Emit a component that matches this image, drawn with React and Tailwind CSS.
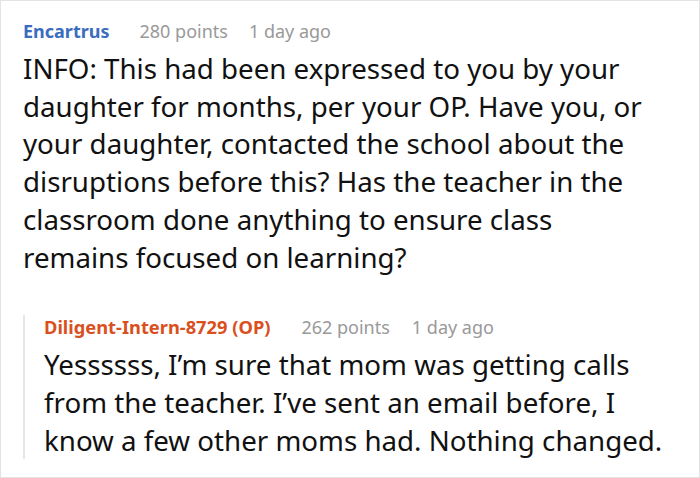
export default function App() {
  const font = { fontFamily: '"Noto Sans", "Open Sans", sans-serif' };
  return (
    <div className="w-[700px] h-[478px] bg-white border border-[#e3e3e3] pl-[22px] pr-[10px] pt-[18px]" style={font}>
      <div className="flex items-baseline text-[18px] leading-[24px]">
        <span className="font-bold text-[#3a6cbf]">Encartrus</span>
        <span className="ml-[30px] text-[#999999]">280 points</span>
        <span className="ml-[21px] text-[#999999]">1 day ago</span>
      </div>
      <p className="mt-[7px] pr-[32px] text-[27.7px] leading-[37.7px] text-[#111111]">
        INFO: This had been expressed to you by your daughter for months, per your OP. Have you, or your daughter, contacted the school about the disruptions before this? Has the teacher in the classroom done anything to ensure class remains focused on learning?
      </p>
      <div className="mt-[49px] border-l-2 border-[#e6e6e6] pl-[19px]">
        <div className="-mt-[10px] flex items-baseline text-[18px] leading-[24px]">
          <span className="font-bold text-[18.3px] text-[#d9501e]">Diligent-Intern-8729 (OP)</span>
          <span className="ml-[31px] text-[#999999]">262 points</span>
          <span className="ml-[22px] text-[#999999]">1 day ago</span>
        </div>
        <p className="mt-[7px] text-[27.7px] leading-[37.7px] text-[#111111]">
          Yessssss, I’m sure that mom was getting calls from the teacher. I’ve sent an email before, I know a few other moms had. Nothing changed.
        </p>
      </div>
    </div>
  );
}
